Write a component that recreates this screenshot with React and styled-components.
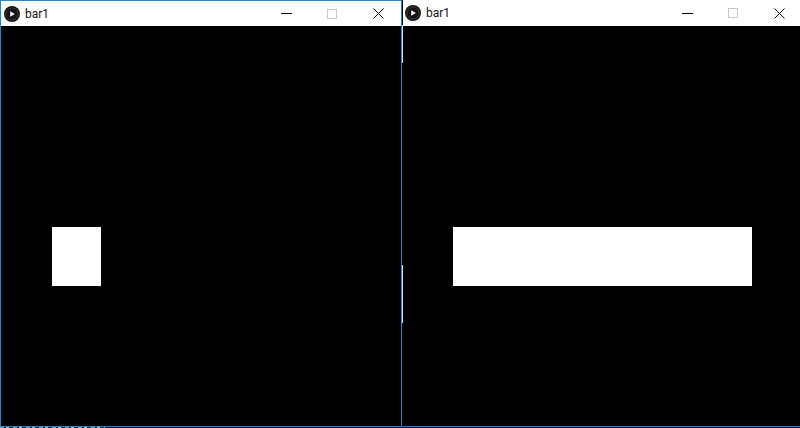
import styled, { createGlobalStyle } from 'styled-components'

const GlobalStyle = createGlobalStyle`
    html, body {
        margin: 0;
        padding: 0;
        background: #000000;
    }
    body {
        width: 800px;
        height: 428px;
        overflow: hidden;
        font-family: Roboto, "Liberation Sans", sans-serif;
    }
`

const Desktop = styled.div`
    display: flex;
    flex-direction: column;
    width: 800px;
    height: 428px;
    overflow: hidden;
`

const Janelas = styled.div`
    flex: none;
    display: flex;
    height: 427px;
`

const Janela = styled.div`
    box-sizing: border-box;
    flex: none;
    display: flex;
    flex-direction: column;
    width: ${props => props.$largura}px;
    height: 427px;
    border: ${props => props.$ativa ? '1px solid #1a86dc' : '0'};
    border-bottom: 1px solid #1a86dc;
`

const Fresta = styled.div`
    flex: none;
    display: flex;
    flex-direction: column;
    width: 1px;
`

const Risco = styled.div`
    width: 1px;
    height: ${props => props.$altura}px;
    margin-top: ${props => props.$topo}px;
    background: #d6e6f2;
`

const BarraTitulo = styled.div`
    flex: none;
    display: flex;
    align-items: center;
    height: ${props => props.$ativa ? 25 : 26}px;
    background: #ffffff;
`

const Titulo = styled.span`
    flex: 1;
    margin-left: 5px;
    font-size: 12px;
    color: #111111;
`

const BotaoJanela = styled.div`
    display: flex;
    align-items: center;
    justify-content: center;
    width: ${props => props.$largura || 46}px;
    height: 100%;
`

const Tela = styled.div`
    flex: 1;
    display: flex;
    align-items: flex-start;
    padding: 201px 0 0 ${props => props.$esquerda}px;
    background: #000000;
`

const Barra = styled.div`
    width: ${props => props.$largura}px;
    height: 59px;
    background: #ffffff;
`

const IconeApp = styled.svg`
    flex: none;
    margin-left: ${props => props.$margem}px;
    width: 16px;
    height: 16px;
`

// resto do texto do desktop, cortado na ultima linha da captura
const Rodape = styled.div`
    flex: none;
    width: 105px;
    height: 1px;
    background: repeating-linear-gradient(
        90deg,
        #9a9a9a 0 4px,
        #000000 4px 6px,
        #c4c4c4 6px 9px,
        #1a1a1a 9px 13px
    );
`

const Icone = ({ margem }) => (
    <IconeApp $margem={margem} viewBox="0 0 16 16">
        <circle cx="8" cy="8" r="8" fill="#141414" />
        <circle cx="8" cy="8" r="6" fill="none" stroke="#3a3a3a" strokeWidth="1" />
        <path d="M6.2 5.2 L10.8 8 L6.2 10.8 Z" fill="#ffffff" />
    </IconeApp>
)

const Controles = () => (
    <>
        <BotaoJanela $largura={45}>
            <svg width="11" height="11" viewBox="0 0 11 11">
                <path d="M0 5.5 H11" stroke="#000000" strokeWidth="1" />
            </svg>
        </BotaoJanela>
        <BotaoJanela>
            <svg width="10" height="10" viewBox="0 0 10 10">
                <rect x="0.5" y="0.5" width="9" height="9" fill="none" stroke="#cacaca" />
            </svg>
        </BotaoJanela>
        <BotaoJanela>
            <svg width="11" height="11" viewBox="0 0 11 11">
                <path d="M0.5 0.5 L10.5 10.5 M10.5 0.5 L0.5 10.5" stroke="#000000" strokeWidth="1" />
            </svg>
        </BotaoJanela>
    </>
)

const App = () => (
    <>
        <GlobalStyle />
        <Desktop>
            <Janelas>
                <Janela $ativa $largura={402}>
                    <BarraTitulo $ativa>
                        <Icone margem={3} />
                        <Titulo>bar1</Titulo>
                        <Controles />
                    </BarraTitulo>
                    <Tela $esquerda={51}>
                        <Barra $largura={49} />
                    </Tela>
                </Janela>
                <Fresta>
                    <Risco $topo={25} $altura={38} />
                    <Risco $topo={202} $altura={58} />
                </Fresta>
                <Janela $largura={399}>
                    <BarraTitulo>
                        <Icone margem={2} />
                        <Titulo>bar1</Titulo>
                        <Controles />
                    </BarraTitulo>
                    <Tela $esquerda={50}>
                        <Barra $largura={299} />
                    </Tela>
                </Janela>
            </Janelas>
            <Rodape />
        </Desktop>
    </>
)

export default App
